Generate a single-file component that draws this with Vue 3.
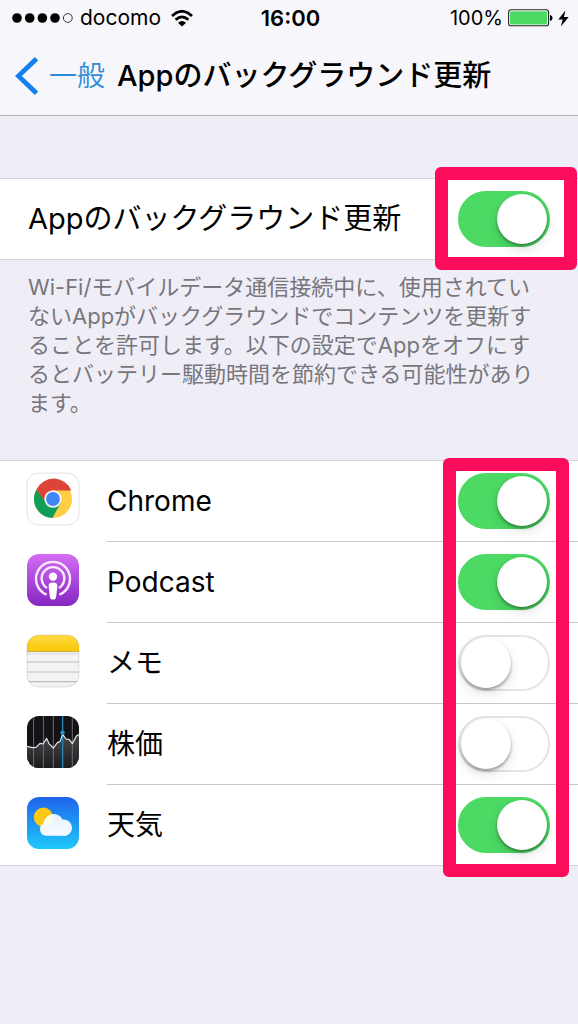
<template>
  <div class="screen">
    <header class="top">
      <div class="status-bar">
        <div class="status-left">
          <svg class="signal" viewBox="0 0 61 10" aria-hidden="true">
            <circle cx="5" cy="5" r="4.8" />
            <circle cx="17.7" cy="5" r="4.8" />
            <circle cx="30.4" cy="5" r="4.8" />
            <circle cx="43" cy="5" r="4.8" />
            <circle cx="55.8" cy="5" r="4.4" fill="none" stroke="#222" stroke-width="0.9" />
          </svg>
          <span>docomo</span>
          <svg class="wifi" viewBox="0 0 22 17" aria-hidden="true">
            <path d="M1 6 Q11 -3.4 21 6" fill="none" stroke="#000" stroke-width="2.7" />
            <path d="M4.6 9.8 Q11 3.8 17.4 9.8" fill="none" stroke="#000" stroke-width="2.6" />
            <path d="M7 12.8 Q11 9.4 15 12.8 L11 16.4 Z" />
          </svg>
        </div>
        <span class="clock">16:00</span>
        <div class="status-right">
          <span>100%</span>
          <svg class="battery" viewBox="0 0 45 18" aria-hidden="true">
            <rect x="0.6" y="0.8" width="40" height="16" rx="2.4" fill="#fff" stroke="#222" stroke-width="1.1" />
            <rect x="2" y="2.2" width="37.2" height="13.2" rx="1" fill="#4cd964" />
            <path d="M42 6 Q44.6 6.6 44.6 9 Q44.6 11.4 42 12 Z" />
          </svg>
          <svg class="bolt" viewBox="0 0 11 17" aria-hidden="true">
            <path d="M7.4 0.5 L0.3 9.4 H4.7 L2.8 16.5 L10.7 7 H6 Z" />
          </svg>
        </div>
      </div>
      <nav class="nav-bar">
        <a class="back" href="#">
          <svg class="chevron" viewBox="0 0 24 38" aria-hidden="true">
            <path d="M21.5 1.8 L3.4 19 L21.5 36.2" fill="none" stroke="#1280ee" stroke-width="4.8" />
          </svg>
          <span>一般</span>
        </a>
        <h1>Appのバックグラウンド更新</h1>
      </nav>
    </header>

    <main>
      <section class="group master">
        <div class="row">
          <label for="master">Appのバックグラウンド更新</label>
          <input id="master" v-model="master" class="switch" type="checkbox" role="switch" />
        </div>
        <div class="highlight highlight-master"></div>
      </section>

      <p class="note">
        Wi-Fi/モバイルデータ通信接続中に、使用されていないAppがバックグラウンドでコンテンツを更新することを許可します。以下の設定でAppをオフにするとバッテリー駆動時間を節約できる可能性があります。
      </p>

      <section class="group apps">
        <div v-for="app in apps" :key="app.id" class="row app-row">
          <svg class="icon" viewBox="0 0 54 54" aria-hidden="true">
            <g v-if="app.id === 'chrome'">
              <rect x="1" y="1" width="52" height="52" rx="11.5" fill="#fff" stroke="#e2e2e2" />
              <circle cx="27" cy="27" r="19" fill="#ffcd46" />
              <path d="M10.5 17.5 A19 19 0 0 0 26.5 46 L34.5 31.2 L27 27 L18.5 27 Z" fill="#0f9d58" />
              <path d="M10.5 17.5 L18.5 29 L20 22 L27 18.4 H45.3 A19 19 0 0 0 10.5 17.5 Z" fill="#db4437" />
              <circle cx="27" cy="27" r="8.7" fill="#f4f4f4" />
              <circle cx="27" cy="27" r="6.9" fill="#4285f4" />
            </g>
            <g v-else-if="app.id === 'podcast'">
              <defs>
                <linearGradient id="podcast-bg" x1="0" y1="0" x2="0" y2="1">
                  <stop offset="0" stop-color="#d46df2" />
                  <stop offset="1" stop-color="#8426c2" />
                </linearGradient>
              </defs>
              <rect x="1" y="1" width="52" height="52" rx="12" fill="url(#podcast-bg)" />
              <g fill="none" stroke="#fbeaff" stroke-width="2.4">
                <path d="M20.6 41.6 A17 17 0 1 1 33.4 41.6" />
                <path d="M21 35 A11.3 11.3 0 1 1 33 35" />
              </g>
              <circle cx="27" cy="23.6" r="4.2" fill="#fff" />
              <path d="M22.6 33 Q22.6 29.6 27 29.6 Q31.4 29.6 31.4 33 L30.2 43.4 Q29.8 46.6 27 46.6 Q24.2 46.6 23.8 43.4 Z" fill="#fff" />
            </g>
            <g v-else-if="app.id === 'memo'">
              <defs>
                <linearGradient id="memo-top" x1="0" y1="0" x2="0" y2="1">
                  <stop offset="0" stop-color="#ffdb45" />
                  <stop offset="1" stop-color="#fac704" />
                </linearGradient>
                <clipPath id="memo-clip">
                  <rect x="1" y="1" width="52" height="52" rx="12" />
                </clipPath>
              </defs>
              <g clip-path="url(#memo-clip)">
                <rect x="1" y="1" width="52" height="52" fill="#f3f3f3" />
                <rect x="1" y="1" width="52" height="16.4" fill="url(#memo-top)" />
                <path d="M1 17.6 H53" stroke="#c7ab55" />
                <path d="M1 20 H53" stroke="#bbb" stroke-width="1.2" stroke-dasharray="1.2 1.4" />
                <path d="M1 28 H53 M1 38 H53 M1 47.6 H53" stroke="#bdbdbd" stroke-width="1.2" />
              </g>
              <rect x="1" y="1" width="52" height="52" rx="12" fill="none" stroke="#000" stroke-opacity="0.15" stroke-width="0.7" />
            </g>
            <g v-else-if="app.id === 'stocks'">
              <defs>
                <linearGradient id="stocks-area" x1="0" y1="0" x2="0" y2="1">
                  <stop offset="0" stop-color="#48484b" />
                  <stop offset="1" stop-color="#1b1b1e" />
                </linearGradient>
                <clipPath id="stocks-clip">
                  <rect x="1" y="1" width="52" height="52" rx="12" />
                </clipPath>
              </defs>
              <g clip-path="url(#stocks-clip)">
                <rect x="1" y="1" width="52" height="52" fill="#131216" />
                <path :d="stockLine + ' V54 H0 Z'" fill="url(#stocks-area)" />
                <path d="M7.6 1 V53 M17.4 1 V53 M27.3 1 V53 M46.3 1 V53" stroke="#77777b" stroke-width="0.9" />
                <path d="M36.6 1 V53" stroke="#2586bd" stroke-width="1.4" />
                <path :d="stockLine" fill="none" stroke="#e6e6e6" stroke-width="1.2" stroke-linejoin="round" />
                <circle cx="36.6" cy="17.8" r="2.2" fill="#2b8fc9" />
              </g>
            </g>
            <g v-else>
              <defs>
                <linearGradient id="weather-bg" x1="0" y1="0" x2="0" y2="1">
                  <stop offset="0" stop-color="#1f63ec" />
                  <stop offset="1" stop-color="#1fc9fb" />
                </linearGradient>
                <linearGradient id="weather-cloud" x1="0" y1="0" x2="0" y2="1">
                  <stop offset="0" stop-color="#fff" stop-opacity="0.88" />
                  <stop offset="1" stop-color="#fff" stop-opacity="0.97" />
                </linearGradient>
              </defs>
              <rect x="1" y="1" width="52" height="52" rx="12" fill="url(#weather-bg)" />
              <circle cx="17.4" cy="21.2" r="9.6" fill="#fbc816" />
              <path d="M19.4 39.8 A6.7 6.7 0 0 1 17.4 27.4 A10.2 10.2 0 0 1 36.6 23.6 A8.2 8.2 0 1 1 36.6 39.8 Z" fill="url(#weather-cloud)" />
            </g>
          </svg>
          <div class="app-line">
            <label :for="app.id">{{ app.name }}</label>
            <input :id="app.id" v-model="app.enabled" class="switch" type="checkbox" role="switch" />
          </div>
        </div>
        <div class="highlight highlight-apps"></div>
      </section>
    </main>
  </div>
</template>

<script setup>
import { ref } from 'vue'

const master = ref(true)

const apps = ref([
  { id: 'chrome', name: 'Chrome', enabled: true },
  { id: 'podcast', name: 'Podcast', enabled: true },
  { id: 'memo', name: 'メモ', enabled: false },
  { id: 'stocks', name: '株価', enabled: false },
  { id: 'weather', name: '天気', enabled: true },
])

const stockLine =
  'M0 31 L6 32.6 L10 32.4 L14 28.4 L17 29 L20.6 23.4 L23 28.6 L27.4 33 L31.4 27.6 L34 26.6 L36.6 19.4 L40 24 L43 24.4 L46.4 28.6 L50.4 21 L54 19'
</script>

<style>
body {
  margin: 0;
  background: #efeef6;
}
</style>

<style scoped>
.screen {
  min-height: 100vh;
  background: #efeef6;
  color: #000;
  font-family: Inter, "Noto Sans CJK JP", sans-serif;
}

.top {
  background: #f7f6fa;
  border-bottom: 1px solid #b6b5ba;
}

.status-bar {
  display: grid;
  grid-template-columns: 1fr auto 1fr;
  align-items: center;
  height: 36px;
  padding: 0 9px 0 12px;
  font-size: 21px;
  line-height: 24px;
}

.status-left,
.status-right {
  display: flex;
  align-items: center;
}

.status-left {
  gap: 7px;
}

.status-right {
  justify-content: flex-end;
  gap: 5px;
  font-size: 20px;
}

.signal {
  width: 61px;
  height: 10px;
}

.wifi {
  width: 22px;
  height: 17px;
  margin-left: 3px;
}

.clock {
  font-size: 22px;
  font-weight: 600;
}

.battery {
  width: 45px;
  height: 18px;
}

.bolt {
  width: 11px;
  height: 17px;
}

.nav-bar {
  display: flex;
  align-items: center;
  gap: 12px;
  height: 79px;
  padding-left: 15px;
  font-size: 28px;
  line-height: 40px;
  white-space: nowrap;
}

.back {
  display: flex;
  align-items: center;
  gap: 10px;
  color: #2b8bd9;
  font-weight: 350;
  text-decoration: none;
}

.chevron {
  width: 24px;
  height: 38px;
}

.nav-bar h1 {
  margin: 0;
  font-size: 29px;
  font-weight: 500;
}

.group {
  position: relative;
  border-top: 1px solid #d3d2d8;
  border-bottom: 1px solid #d3d2d8;
  background: #fff;
}

.master {
  margin-top: 62px;
}

.row {
  display: flex;
  align-items: center;
  justify-content: space-between;
  font-size: 29px;
  line-height: 40px;
  font-weight: 400;
}

.master .row {
  height: 80px;
  padding: 0 28px;
}

.note {
  margin: 0;
  padding: 13px 40px 42px 28px;
  color: #77767c;
  font-size: 22px;
  line-height: 29px;
  font-weight: 400;
}

.app-row {
  align-items: flex-start;
  padding-left: 26px;
  font-size: 28px;
}

.icon {
  flex-shrink: 0;
  width: 54px;
  height: 54px;
  margin: 11px 27px 0 0;
}

.app-line {
  display: flex;
  flex: 1;
  align-items: center;
  justify-content: space-between;
  height: 80px;
  padding-right: 28px;
  border-bottom: 1px solid #c8c7cc;
}

.app-row:nth-last-child(2) .app-line {
  border-bottom: 0;
}

.switch {
  appearance: none;
  flex-shrink: 0;
  box-sizing: border-box;
  width: 92px;
  height: 56px;
  margin: 0;
  padding: 1px;
  border: 2px solid #e4e4e4;
  border-radius: 28px;
  background: #fff;
}

.switch::before {
  content: "";
  display: block;
  width: 50px;
  height: 50px;
  border-radius: 50%;
  background: #fff;
  box-shadow: 0 2px 3px rgba(0, 0, 0, 0.35), 0 5px 12px rgba(0, 0, 0, 0.12);
}

.switch:checked {
  border-color: #4cd964;
  background: #4cd964;
}

.switch:checked::before {
  margin-left: auto;
}

/* callout frames over the switches */
.highlight {
  position: absolute;
  box-sizing: border-box;
  border: 13px solid #fc0d5c;
  border-radius: 6px;
  pointer-events: none;
}

.highlight-master {
  top: -12px;
  right: 1px;
  width: 142px;
  height: 103px;
}

.highlight-apps {
  top: -3px;
  right: 9px;
  bottom: -12px;
  width: 126px;
}
</style>
